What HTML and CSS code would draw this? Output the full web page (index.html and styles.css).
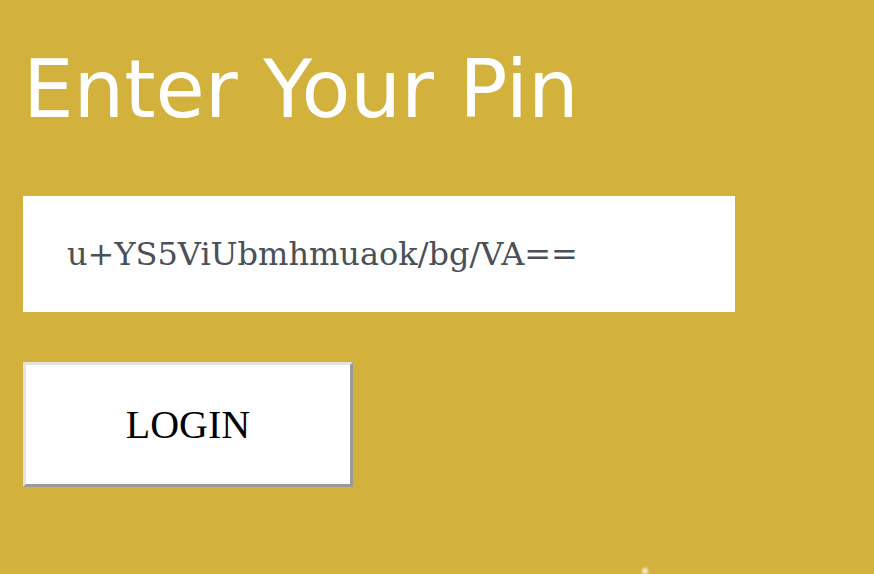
FILE: index.html
```html
<!DOCTYPE html>
<html>
<head>
<meta charset="utf-8">
<link rel="stylesheet" href="styles.css">
</head>
<body>
<main class="page">
  <h1 class="title">Enter Your Pin</h1>
  <div class="pin-field">u+YS5ViUbmhmuaok/bg/VA==</div>
  <button class="login-btn" type="button">LOGIN</button>
</main>
<span class="glow"></span>
</body>
</html>
```

FILE: styles.css
```css
html, body {
  margin: 0;
  padding: 0;
  height: 100%;
  overflow: hidden;
}
body {
  background: #d2b13c;
  position: relative;
}
.page {
  display: flex;
  flex-direction: column;
  align-items: flex-start;
  padding: 0 23px;
}
.title {
  margin: 42px 0 0 0;
  font-family: "DejaVu Sans", sans-serif;
  font-weight: normal;
  font-size: 80px;
  line-height: 96px;
  color: #ffffff;
}
.pin-field {
  margin-top: 58px;
  box-sizing: border-box;
  width: 712px;
  height: 116px;
  background: #ffffff;
  padding-left: 44px;
  display: flex;
  align-items: center;
  font-family: "DejaVu Serif", serif;
  font-size: 32px;
  color: #495057;
}
.login-btn {
  margin-top: 50px;
  box-sizing: border-box;
  width: 330px;
  height: 125px;
  background: #ffffff;
  border-style: solid;
  border-width: 3px;
  border-color: #e2e2e2 #9a9a9a #9a9a9a #e2e2e2;
  font-family: "Liberation Serif", serif;
  font-size: 40px;
  color: #000000;
  padding: 0;
}
.glow {
  position: absolute;
  left: 640px;
  top: 566px;
  width: 10px;
  height: 10px;
  border-radius: 50%;
  background: radial-gradient(circle, rgba(255,255,255,0.9) 0, rgba(255,255,255,0) 70%);
}
```
